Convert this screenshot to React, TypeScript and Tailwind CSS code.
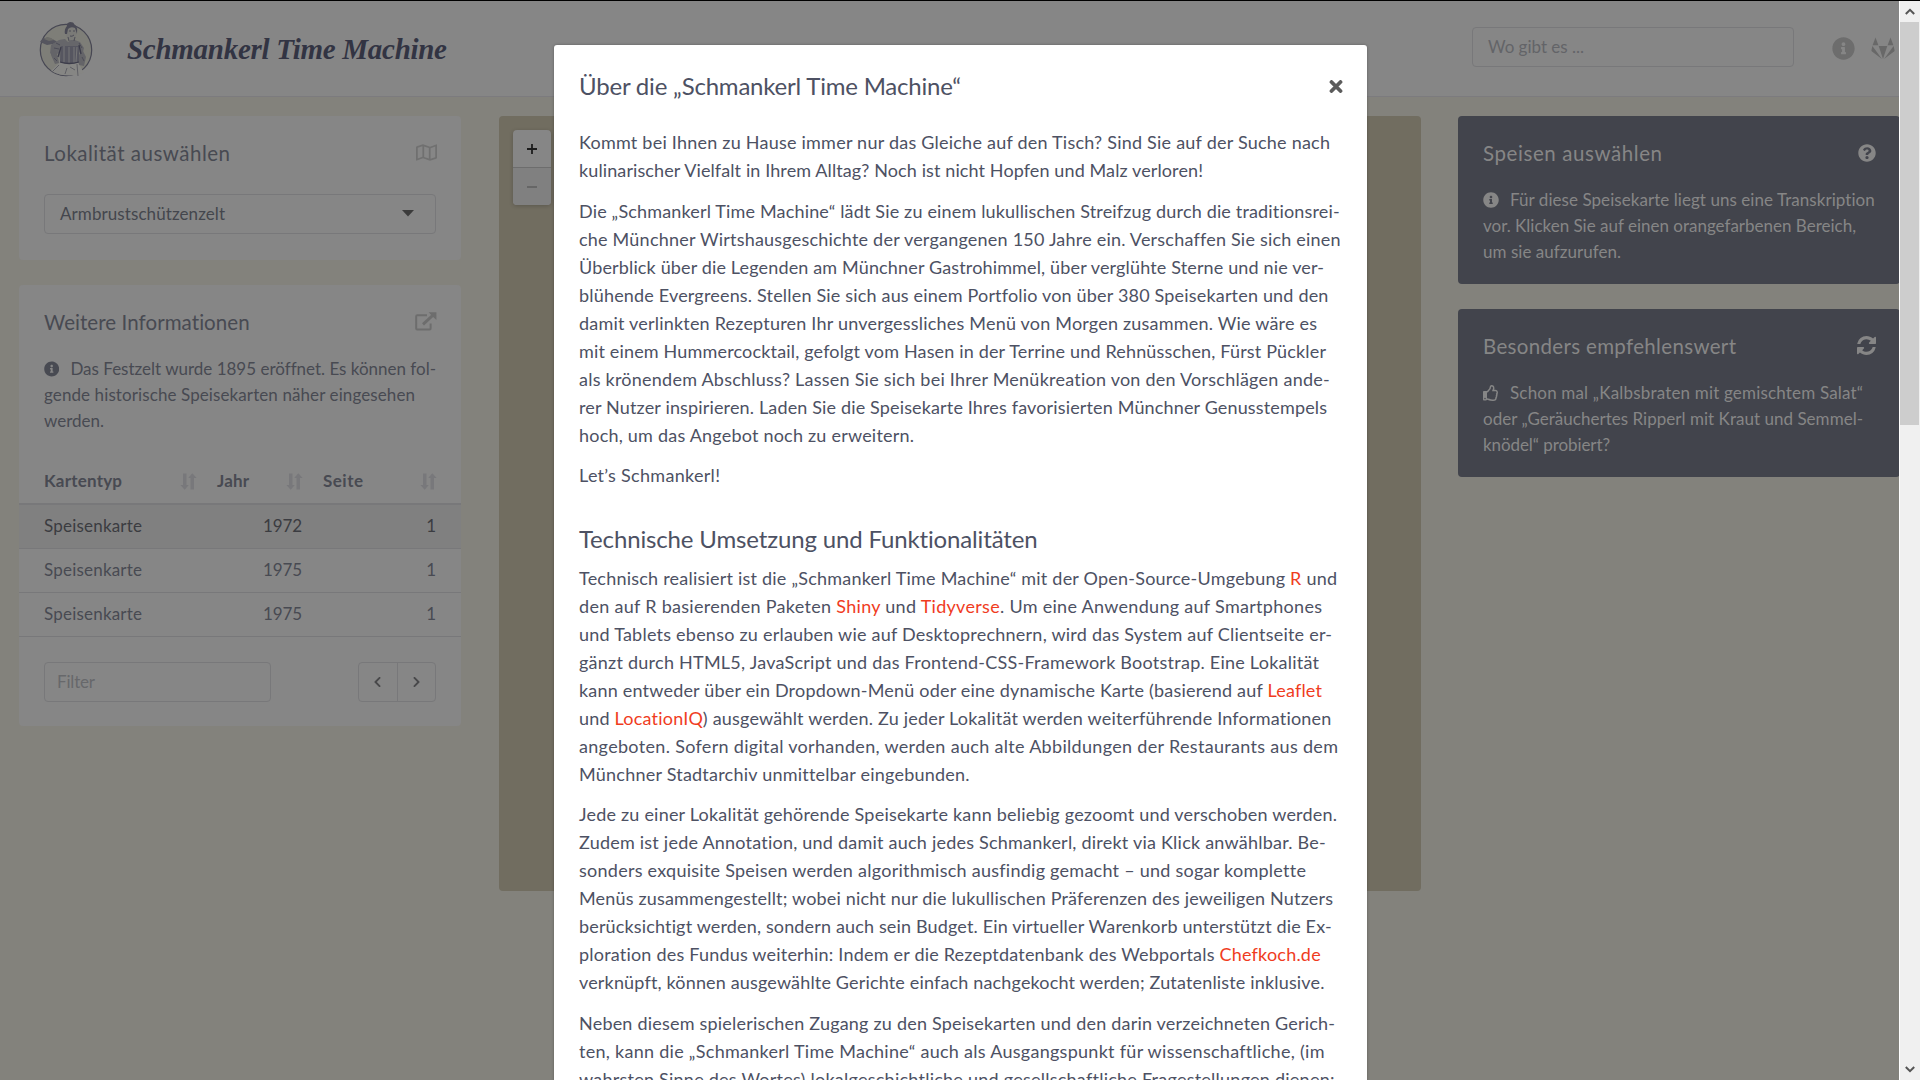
import { useLayoutEffect, useRef, useState } from 'react';
import type { ReactNode } from 'react';
import {
  FaChevronLeft,
  FaChevronRight,
  FaInfoCircle,
  FaQuestionCircle,
  FaRegMap,
  FaRegThumbsUp,
} from 'react-icons/fa';

/* A single line of text whose tracking is adjusted so that it fills `w` pixels. */
function Line({ w, children, className = '' }: { w: number; children: ReactNode; className?: string }) {
  const ref = useRef<HTMLSpanElement>(null);
  const [spacing, setSpacing] = useState(0);
  useLayoutEffect(() => {
    const el = ref.current;
    if (!el) return;
    const count = (el.textContent ?? '').length;
    setSpacing((w - el.getBoundingClientRect().width) / Math.max(1, count - 1));
  }, [w]);
  return (
    <span className={`block whitespace-nowrap ${className}`}>
      <span ref={ref} className="inline-block" style={{ letterSpacing: `${spacing}px` }}>
        {children}
      </span>
    </span>
  );
}

function Link({ children }: { children: ReactNode }) {
  return <a className="text-[#f03c1e]">{children}</a>;
}

function Logo() {
  return (
    <svg className="h-[56px] w-[54px] shrink-0" viewBox="0 0 54 56" fill="none">
      <circle cx="27" cy="29" r="25.7" fill="#7e7e78" stroke="#474753" strokeWidth="1.2" />
      <path d="M20 32 L38 32 L40 43 L45 52 Q27 58 12 50 L20 42Z" fill="#868684" />
      <path d="M1 21 Q4 16 11 17 L17 20 L19 22 L8 24Z" fill="#55555e" />
      <path d="M5 18l3-2 4 1 3 2-5 1z" fill="#6c6c69" />
      <path d="M12 24l8-5 6-1 3 3 4-3 8 3 4 6-1 4-5 1v8H21l-1-8-6 3-3-3z" fill="#66666a" />
      <path d="M13 23l-1 11 4 9 4-1-2-9M43 28l4 8-2 9-5-1-1-8" fill="#646468" />
      <path d="M22 25h18v16q-9 3-19 0z" fill="#565660" />
      <path d="M25 25v16M30 26v16M35 26v16M38 26l-1 15" stroke="#757576" strokeWidth="1.100" />
      <path d="M21 41q9 3 19 0M22 26l-3 10M40 24l2 9" stroke="#3c3c4a" strokeWidth="1.300" />
      <path d="M27 7q1-4 6-4 5 1 5 6l-1 6-3 4h-4l-3-5z" fill="#7a7a77" />
      <path d="M26 13q-1-5 2-8-1-3 3-4 4 0 4 2 4 2 3 10l-2-6q-4-2-7 1l-1 5z" fill="#4a4a55" />
      <path d="M30 10h2M34 10h2M31 15q2 1 4-1M29 16l1 4M36 16l-1 4" stroke="#4c4c56" strokeWidth="1" />
      <path d="M38 43l1 12M20 44l-7 7M28 47l-2 6M31 46l5 3" stroke="#5a5a61" strokeWidth="0.900" />
      <path d="M17 22l4 2M15 27l5 1M40 22l3 5M15 37l3 3M43 36l2 4" stroke="#4c4c57" strokeWidth="1" />
    </svg>
  );
}

function Gitlab() {
  return (
    <svg className="h-[23px] w-[24px]" viewBox="0 0 24 23" fill="#686868">
      <path d="M4.500 0.500 L7.400 8.200 H1.600Z M19.500 0.500 L22.400 8.200 H16.600Z" />
      <path d="M7.700 9 H16.300 L12 22Z" />
      <path d="M1.400 9 L10.900 21.900 L1 14.600 Q0.200 14 0.500 13Z M22.600 9 L13.100 21.900 L23 14.600 Q23.800 14 23.500 13Z" />
    </svg>
  );
}

function ExternalLink() {
  return (
    <svg className="-mr-px h-[19px] w-[22px]" viewBox="0 0 22 19" fill="none" stroke="#6d6d6d">
      <path d="M12 3.200H2.200Q1.200 3.200 1.200 4.200V16.600Q1.200 17.600 2.200 17.600H14.600Q15.600 17.600 15.600 16.600V11.500" strokeWidth="2" />
      <path d="M8 12.400L17.500 3.600" strokeWidth="2.800" />
      <path d="M13.600 0.300H21.400V8L18.700 5.400L16 2.800Z" fill="#6d6d6d" stroke="none" />
    </svg>
  );
}

function Sort() {
  return (
    <svg className="h-[17px] w-[17px]" viewBox="0 0 17 17" fill="#78787b">
      <path d="M3 0.500H6.500V12H8.800L4.700 16.700L0.400 12H3Z" />
      <path d="M10.500 16.500H14V5H16.600L12.300 0.300L8.200 5H10.500Z" />
    </svg>
  );
}

function Refresh() {
  return (
    <svg className="-mr-px h-[19px] w-[19px]" viewBox="0 128 1536 1536" fill="#868686">
      <path d="M1511 1056q0 5-1 7-64 268-268 434.500t-478 166.500q-146 0-282.500-55t-243.500-157l-129 129q-19 19-45 19t-45-19-19-45v-448q0-26 19-45t45-19h448q26 0 45 19t19 45-19 45l-137 137q71 66 161 102t187 36q134 0 250-65t186-179q11-17 53-117 8-23 30-23h192q13 0 22.500 9.500t9.500 22.500zm25-800v448q0 26-19 45t-45 19h-448q-26 0-45-19t-19-45 19-45l138-138q-148-137-349-137-134 0-250 65t-186 179q-11 17-53 117-8 23-30 23h-199q-13 0-22.500-9.500t-9.500-22.500v-7q65-268 270-434.500t480-166.500q146 0 284 55.500t245 156.500l130-129q19-19 45-19t45 19 19 45z" />
    </svg>
  );
}

function Header() {
  return (
    <header className="flex h-[96px] shrink-0 items-start border-b border-[#7c7b7e] bg-[#868686]">
      <div className="ml-[39px] mt-[20px]">
        <Logo />
      </div>
      <h1 className="ml-[34px] mt-[28px] font-['Liberation_Serif',serif] text-[29px] font-bold italic leading-[40px] text-[#323443]">
        <Line w={320}>Schmankerl Time Machine</Line>
      </h1>
      <div className="ml-auto mt-[26px] flex h-[40px] w-[322px] items-center rounded border border-[#78787a] px-[15px] pb-px text-[17px] text-[#636468]">
        <Line w={96}>Wo gibt es ...</Line>
      </div>
      <FaInfoCircle className="ml-[38px] mt-[36px] h-[23px] w-[23px] text-[#6d6d6d]" />
      <div className="ml-[16px] mr-[4px] mt-[36px]">
        <Gitlab />
      </div>
    </header>
  );
}

const rows = ['1972', '1975', '1975'];

function Sidebar() {
  return (
    <div className="ml-[19px] flex w-[442px] shrink-0 flex-col gap-[25px]">
      <section className="h-[144px] rounded bg-[#868686] px-[25px] pt-[22px]">
        <div className="flex h-[30px] items-center justify-between">
          <h2 className="text-[20.5px] leading-[30px] text-[#484a52]">
            <Line w={186}>Lokalität auswählen</Line>
          </h2>
          <FaRegMap className="-mr-px -mt-px h-[19px] w-[21px] text-[#707070]" />
        </div>
        <div className="mt-[26px] flex h-[40px] items-center justify-between rounded border border-[#78787a] pb-px pl-[15px] pr-[21px] text-[17px] text-[#44464d]">
          <Line w={165}>Armbrustschützenzelt</Line>
          <svg className="h-[7px] w-[12px]" viewBox="0 0 12 7" fill="#3b3b3b">
            <path d="M0 0H12L6 6.500Z" />
          </svg>
        </div>
      </section>

      <section className="h-[441px] rounded bg-[#868686] pt-[22px] text-[17px] text-[#484a52]">
        <div className="flex h-[30px] items-center justify-between px-[25px]">
          <h2 className="text-[20.5px] leading-[30px]">
            <Line w={206}>Weitere Informationen</Line>
          </h2>
          <div className="-mt-0.5">
            <ExternalLink />
          </div>
        </div>
        <div className="px-[25px] pt-[19px] leading-[26px]">
          <div className="flex items-center">
            <FaInfoCircle className="mr-[11px] h-4 w-4" />
            <Line w={365}>Das Festzelt wurde 1895 eröffnet. Es können fol-</Line>
          </div>
          <Line w={371}>gende historische Speisekarten näher eingesehen</Line>
          <Line w={60}>werden.</Line>
        </div>
        <div className="mt-[27px] flex h-[44px] items-center border-b-2 border-[#78787a] pb-0.5 pl-[25px] font-bold">
          <div className="flex w-[153px] items-center justify-between">
            <Line w={78}>Kartentyp</Line>
            <Sort />
          </div>
          <div className="ml-[20px] flex w-[86px] items-center justify-between">
            <Line w={32}>Jahr</Line>
            <Sort />
          </div>
          <div className="ml-[20px] flex w-[114px] items-center justify-between">
            <Line w={40}>Seite</Line>
            <Sort />
          </div>
        </div>
        {rows.map((year, i) => (
          <div
            key={i}
            className={`flex h-[44px] items-center border-b border-[#78787a] pl-[25px] pr-[25px] pb-px ${
              i === 0 ? 'bg-[#808080] text-[#3b3c41]' : ''
            }`}
          >
            <div className="w-[219px]">
              <Line w={98}>Speisenkarte</Line>
            </div>
            <Line w={39}>{year}</Line>
            <span className="ml-auto">1</span>
          </div>
        ))}
        <div className="mt-[25px] flex justify-between px-[25px]">
          <div className="flex h-[40px] w-[227px] items-center rounded border border-[#78787a] px-[12px] text-[#67686b]">
            <Line w={38}>Filter</Line>
          </div>
          <div className="flex h-[40px] w-[78px] rounded border border-[#78787a] text-[#48484a]">
            <div className="flex flex-1 items-center justify-center border-r border-[#78787a]">
              <FaChevronLeft className="h-[12px] w-[9px]" />
            </div>
            <div className="flex flex-1 items-center justify-center">
              <FaChevronRight className="h-[12px] w-[9px]" />
            </div>
          </div>
        </div>
      </section>
    </div>
  );
}

function MapPanel() {
  return (
    <div className="ml-[38px] h-[775px] w-[922px] shrink-0 rounded bg-[#716d60] pl-[14px] pt-[14px]">
      <div className="h-[75px] w-[38px] overflow-hidden rounded bg-[#868686] shadow-[0_1px_4px_rgba(0,0,0,0.2)]">
        <div className="flex h-[38px] items-center justify-center border-b border-[#6d6d6d]">
          <svg className="h-[10px] w-[10px]" viewBox="0 0 10 10" stroke="#1c1c1c" strokeWidth="1.800">
            <path d="M5 0V10M0 5H10" />
          </svg>
        </div>
        <div className="flex h-[37px] items-center justify-center bg-[#808080]">
          <svg className="h-[2px] w-[10px]" viewBox="0 0 10 2" fill="#666666">
            <path d="M0 0H10V2H0Z" />
          </svg>
        </div>
      </div>
    </div>
  );
}

function Aside() {
  return (
    <div className="ml-[37px] flex w-[442px] shrink-0 flex-col gap-[25px] text-[17px] leading-[26px] text-[#868686]">
      <section className="h-[168px] rounded bg-[#42444c] px-[25px] pt-[22px]">
        <div className="flex h-[30px] items-center justify-between">
          <h2 className="text-[20.5px] leading-[30px]">
            <Line w={179}>Speisen auswählen</Line>
          </h2>
          <FaQuestionCircle className="-mr-px -mt-px h-[18px] w-[18px]" />
        </div>
        <div className="pt-[19px]">
          <div className="flex items-center">
            <FaInfoCircle className="mr-[11px] h-4 w-4" />
            <Line w={365}>Für diese Speisekarte liegt uns eine Transkription</Line>
          </div>
          <Line w={373}>vor. Klicken Sie auf einen orangefarbenen Bereich,</Line>
          <Line w={138}>um sie aufzurufen.</Line>
        </div>
      </section>
      <section className="h-[168px] rounded bg-[#42444c] px-[25px] pt-[22px]">
        <div className="flex h-[30px] items-center justify-between">
          <h2 className="text-[20.5px] leading-[30px]">
            <Line w={253}>Besonders empfehlenswert</Line>
          </h2>
          <div className="-mt-0.5">
            <Refresh />
          </div>
        </div>
        <div className="pt-[19px]">
          <div className="flex items-center">
            <FaRegThumbsUp className="mr-[11px] h-4 w-4" />
            <Line w={353}>Schon mal „Kalbsbraten mit gemischtem Salat“</Line>
          </div>
          <Line w={380}>oder „Geräuchertes Ripperl mit Kraut und Semmel-</Line>
          <Line w={127}>knödel“ probiert?</Line>
        </div>
      </section>
    </div>
  );
}

function Modal() {
  return (
    <div className="absolute left-[554px] top-[44px] h-[1036px] w-[813px] overflow-hidden rounded-t-[3px] bg-white px-[25px] pt-[26px] text-[18px] leading-[28px] text-[#4d5163] shadow-[0_0_3px_rgba(0,0,0,0.3)]">
      <div className="flex h-[30px] items-center justify-between">
        <h2 className="text-2xl leading-[30px]">
          <Line w={382}>Über die „Schmankerl Time Machine“</Line>
        </h2>
        <svg className="-mr-px h-[13px] w-[14px]" viewBox="0 0 14 13" stroke="#5c5c5c" strokeWidth="3.800" strokeLinecap="round">
          <path d="M2.500 2L11.500 11M11.500 2L2.500 11" />
        </svg>
      </div>
      <div className="flex flex-col gap-[12.5px] pt-[27px]">
        <p>
          <Line w={751}>Kommt bei Ihnen zu Hause immer nur das Gleiche auf den Tisch? Sind Sie auf der Suche nach</Line>
          <Line w={624}>kulinarischer Vielfalt in Ihrem Alltag? Noch ist nicht Hopfen und Malz verloren!</Line>
        </p>
        <p>
          <Line w={761}>Die „Schmankerl Time Machine“ lädt Sie zu einem lukullischen Streifzug durch die traditionsrei-</Line>
          <Line w={761}>che Münchner Wirtshausgeschichte der vergangenen 150 Jahre ein. Verschaffen Sie sich einen</Line>
          <Line w={745}>Überblick über die Legenden am Münchner Gastrohimmel, über verglühte Sterne und nie ver-</Line>
          <Line w={749}>blühende Evergreens. Stellen Sie sich aus einem Portfolio von über 380 Speisekarten und den</Line>
          <Line w={738}>damit verlinkten Rezepturen Ihr unvergessliches Menü von Morgen zusammen. Wie wäre es</Line>
          <Line w={747}>mit einem Hummercocktail, gefolgt vom Hasen in der Terrine und Rehnüsschen, Fürst Pückler</Line>
          <Line w={751}>als krönendem Abschluss? Lassen Sie sich bei Ihrer Menükreation von den Vorschlägen ande-</Line>
          <Line w={748}>rer Nutzer inspirieren. Laden Sie die Speisekarte Ihres favorisierten Münchner Genusstempels</Line>
          <Line w={335}>hoch, um das Angebot noch zu erweitern.</Line>
        </p>
        <p>
          <Line w={141}>Let’s Schmankerl!</Line>
        </p>
      </div>
      <h2 className="mt-[35px] text-2xl leading-[30px]">
        <Line w={459}>Technische Umsetzung und Funktionalitäten</Line>
      </h2>
      <div className="flex flex-col gap-[12.5px] pt-[9.7px]">
        <p>
          <Line w={758}>
            Technisch realisiert ist die „Schmankerl Time Machine“ mit der Open-Source-Umgebung <Link>R</Link> und
          </Line>
          <Line w={743}>
            den auf R basierenden Paketen <Link>Shiny</Link> und <Link>Tidyverse</Link>. Um eine Anwendung auf Smartphones
          </Line>
          <Line w={753}>und Tablets ebenso zu erlauben wie auf Desktoprechnern, wird das System auf Clientseite er-</Line>
          <Line w={740}>gänzt durch HTML5, JavaScript und das Frontend-CSS-Framework Bootstrap. Eine Lokalität</Line>
          <Line w={743}>
            kann entweder über ein Dropdown-Menü oder eine dynamische Karte (basierend auf <Link>Leaflet</Link>
          </Line>
          <Line w={753}>
            und <Link>LocationIQ</Link>) ausgewählt werden. Zu jeder Lokalität werden weiterführende Informationen
          </Line>
          <Line w={759}>angeboten. Sofern digital vorhanden, werden auch alte Abbildungen der Restaurants aus dem</Line>
          <Line w={390}>Münchner Stadtarchiv unmittelbar eingebunden.</Line>
        </p>
        <p>
          <Line w={758}>Jede zu einer Lokalität gehörende Speisekarte kann beliebig gezoomt und verschoben werden.</Line>
          <Line w={747}>Zudem ist jede Annotation, und damit auch jedes Schmankerl, direkt via Klick anwählbar. Be-</Line>
          <Line w={726}>sonders exquisite Speisen werden algorithmisch ausfindig gemacht – und sogar komplette</Line>
          <Line w={754}>Menüs zusammengestellt; wobei nicht nur die lukullischen Präferenzen des jeweiligen Nutzers</Line>
          <Line w={753}>berücksichtigt werden, sondern auch sein Budget. Ein virtueller Warenkorb unterstützt die Ex-</Line>
          <Line w={742}>
            ploration des Fundus weiterhin: Indem er die Rezeptdatenbank des Webportals <Link>Chefkoch.de</Link>
          </Line>
          <Line w={745}>verknüpft, können ausgewählte Gerichte einfach nachgekocht werden; Zutatenliste inklusive.</Line>
        </p>
        <p>
          <Line w={756}>Neben diesem spielerischen Zugang zu den Speisekarten und den darin verzeichneten Gerich-</Line>
          <Line w={745}>ten, kann die „Schmankerl Time Machine“ auch als Ausgangspunkt für wissenschaftliche, (im</Line>
          <Line w={755}>wahrsten Sinne des Wortes) lokalgeschichtliche und gesellschaftliche Fragestellungen dienen:</Line>
        </p>
      </div>
    </div>
  );
}

function Scrollbar() {
  return (
    <div className="flex w-[21px] shrink-0 flex-col border-l border-white bg-[#f0f0f0]">
      <div className="flex h-[21px] items-center justify-center">
        <svg className="h-[7px] w-[10px]" viewBox="0 0 10 7" fill="none" stroke="#555" strokeWidth="2">
          <path d="M0.800 6L5 1.800L9.200 6" />
        </svg>
      </div>
      <div className="h-[403px] w-[19px] bg-[#cdcdcd]" />
      <div className="mt-auto flex h-[21px] items-center justify-center">
        <svg className="h-[7px] w-[10px]" viewBox="0 0 10 7" fill="none" stroke="#555" strokeWidth="2">
          <path d="M0.800 1L5 5.200L9.200 1" />
        </svg>
      </div>
    </div>
  );
}

export default function App() {
  return (
    <div className="relative flex h-[1080px] w-[1920px] overflow-hidden border-t border-black bg-[#83827c] font-[Lato,sans-serif]">
      <div className="flex w-[1899px] shrink-0 flex-col overflow-hidden">
        <Header />
        <main className="flex items-start pt-[19px]">
          <Sidebar />
          <MapPanel />
          <Aside />
        </main>
      </div>
      <Scrollbar />
      <Modal />
    </div>
  );
}
